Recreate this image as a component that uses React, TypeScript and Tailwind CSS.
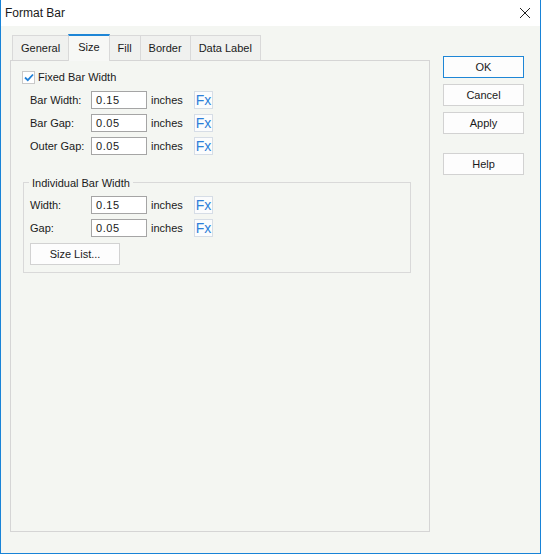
import React from "react";

const font = { fontFamily: '"Liberation Sans", Arial, sans-serif' };

function Fx() {
  return (
    <span className="flex h-[18px] w-[19px] items-center justify-center border border-[#d6dde6] bg-[#fbfcfd] text-[14px] leading-none text-[#2e7fd8]">
      Fx
    </span>
  );
}

function Row({ label, value }: { label: string; value: string }) {
  return (
    <div className="flex h-[18px] items-center whitespace-nowrap">
      <span className="w-[61px]">{label}</span>
      <div className="flex h-[18px] w-[56px] items-center border border-[#a5a5a5] bg-white pl-[4px] tracking-[0.6px]">{value}</div>
      <span className="w-[47px] pl-[4px]">inches</span>
      <Fx />
    </div>
  );
}

function Tab({ label, active }: { label: string; active?: boolean }) {
  if (active) {
    return (
      <div className="relative z-10 -mb-px -ml-px flex h-[27px] items-center border-x border-t-2 border-[#d9d9d9] border-t-[#1e86d6] bg-[#f7f8f6] px-[9px] pb-[3px]">
        {label}
      </div>
    );
  }
  return (
    <div className="-ml-px flex h-[25px] items-center border border-b-0 border-[#d9d9d9] bg-[#f0f1ef] px-[8px] first:ml-0">
      {label}
    </div>
  );
}

function Btn({ label, primary }: { label: string; primary?: boolean }) {
  return (
    <div
      className={
        "flex h-[22px] w-[81px] items-center justify-center border bg-[#fdfdfd] " +
        (primary ? "border-[#1e86d6]" : "border-[#d2d2d2]")
      }
    >
      {label}
    </div>
  );
}

export default function App() {
  return (
    <div className="flex h-[554px] w-[541px] flex-col border-x border-b border-[#1883d7] bg-[#f4f6f2] text-[11px] text-[#1a1a1a]" style={font}>
      <div className="flex h-[26px] items-center justify-between bg-white pl-[4px] pr-[9px] text-[12px]">
        <span>Format Bar</span>
        <svg width="12" height="12" viewBox="0 0 12 12" stroke="#222" strokeWidth="1">
          <path d="M1 1 L11 11 M11 1 L1 11" />
        </svg>
      </div>

      <div className="flex flex-1">
        <div className="ml-[9px] mt-[8px] flex w-[420px] flex-col pb-[21px]">
          <div className="ml-[2px] flex items-end">
            <Tab label="General" />
            <Tab label="Size" active />
            <Tab label="Fill" />
            <Tab label="Border" />
            <Tab label="Data Label" />
          </div>

          <div className="flex flex-1 flex-col border border-[#d5d5d5] bg-[#f4f6f2] pl-[19px] pt-[9px]">
            <div className="-ml-[8px] flex h-[15px] items-center gap-[3px]">
              <span className="flex h-[13px] w-[13px] items-center justify-center border border-[#c9c9c9] bg-white">
                <svg width="10" height="9" viewBox="0 0 10 9" fill="none" stroke="#1f80d8" strokeWidth="1.8">
                  <path d="M1 4.5 L3.8 7.2 L9 1.5" />
                </svg>
              </span>
              <span>Fixed Bar Width</span>
            </div>

            <div className="mt-[6px] flex flex-col gap-[5px]">
              <Row label="Bar Width:" value="0.15" />
              <Row label="Bar Gap:" value="0.05" />
              <Row label="Outer Gap:" value="0.05" />
            </div>

            <div className="relative -ml-[7px] mt-[27px] h-[91px] w-[388px] border border-[#d9d9d9] pl-[6px] pt-[13px]">
              <span className="absolute -top-[8px] left-[5px] bg-[#f4f6f2] px-[3px]">Individual Bar Width</span>
              <div className="flex flex-col gap-[5px]">
                <Row label="Width:" value="0.15" />
                <Row label="Gap:" value="0.05" />
              </div>
              <div className="mt-[6px] flex h-[22px] w-[90px] items-center justify-center border border-[#d2d2d2] bg-[#fdfdfd]">
                Size List...
              </div>
            </div>
          </div>
        </div>

        <div className="ml-[13px] mt-[30px] flex flex-col gap-[6px]">
          <Btn label="OK" primary />
          <Btn label="Cancel" />
          <Btn label="Apply" />
          <div className="mt-[13px]">
            <Btn label="Help" />
          </div>
        </div>
      </div>
    </div>
  );
}
